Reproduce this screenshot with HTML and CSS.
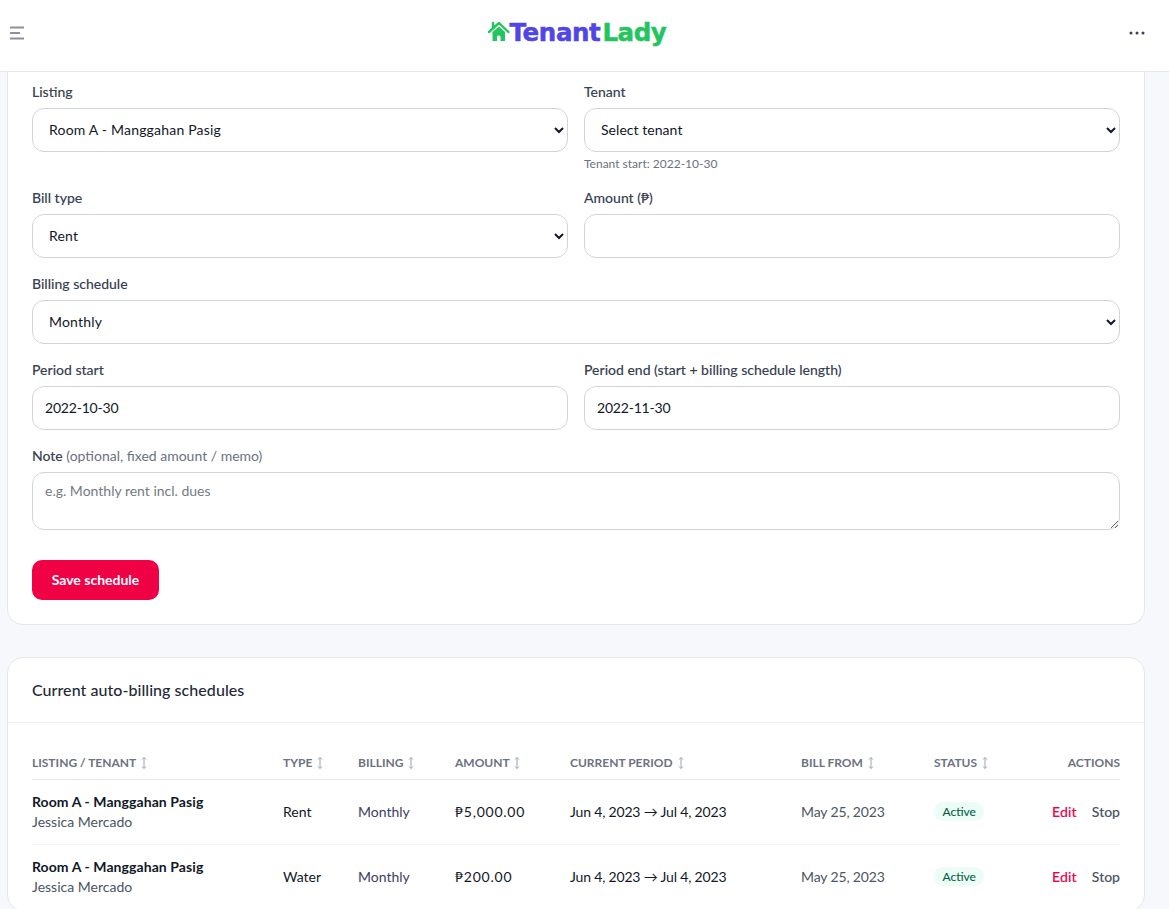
FILE: index.html
```html
<!DOCTYPE html>
<html lang="en">
<head>
<meta charset="utf-8">
<title>TenantLady</title>
<link rel="stylesheet" href="styles.css">
</head>
<body>
<div class="app">
  <header class="topbar">
    <button class="icon-btn" aria-label="Menu">
      <svg width="16" height="14" viewBox="0 0 16 14"><path d="M1 1.500H15M1 7H11M1 12.500H15" stroke="#8b909c" stroke-width="2" fill="none"/></svg>
    </button>
    <div class="logo">
      <svg class="logo-house" width="22" height="22" viewBox="0 0 22 22"><path d="M1 11 11 2l9.500 9M5 2v4" stroke="#22c55e" stroke-width="2.400" fill="none" stroke-linecap="round" stroke-linejoin="round"/><path d="M4.500 11 11 5.500 17 11v9h-4.500v-4.500a2 2 0 0 0-3.500 0V20H4.500z" fill="#22c55e"/></svg>
      <span class="logo-a">Tenant</span><span class="logo-b">Lady</span>
    </div>
    <button class="icon-btn" aria-label="More">
      <svg width="16" height="4" viewBox="0 0 16 4"><circle cx="2" cy="2" r="1.500" fill="#374151"/><circle cx="8" cy="2" r="1.500" fill="#374151"/><circle cx="14" cy="2" r="1.500" fill="#374151"/></svg>
    </button>
  </header>
  <main class="main">
    <section class="card form-card">
      <div class="form-row two">
        <div class="field"><label>Listing</label><select class="control select"><option>Room A - Manggahan Pasig</option></select></div>
        <div class="field"><label>Tenant</label><select class="control select tight"><option>Select tenant</option></select><p class="hint">Tenant start: 2022-10-30</p></div>
      </div>
      <div class="form-row two">
        <div class="field"><label>Bill type</label><select class="control select"><option>Rent</option></select></div>
        <div class="field"><label>Amount (₱)</label><input class="control" type="text"></div>
      </div>
      <div class="form-row">
        <div class="field"><label>Billing schedule</label><select class="control select"><option>Monthly</option></select></div>
      </div>
      <div class="form-row two">
        <div class="field"><label>Period start</label><input class="control date" type="text" value="2022-10-30"></div>
        <div class="field"><label>Period end (start + billing schedule length)</label><input class="control date" type="text" value="2022-11-30"></div>
      </div>
      <div class="form-row">
        <div class="field"><label>Note <span class="muted">(optional, fixed amount / memo)</span></label><textarea class="control area" placeholder="e.g. Monthly rent incl. dues"></textarea></div>
      </div>
      <button class="save">Save schedule</button>
    </section>
    <section class="card table-card">
      <h2 class="card-title">Current auto-billing schedules</h2>
      <div class="table-wrap">
        <table>
          <thead>
            <tr>
              <th class="c1">Listing / Tenant <svg class="sort" width="8" height="14" viewBox="0 0 8 14"><path d="M4 1.500V12.500M2 3.500 4 1.500 6 3.500M2 10.500 4 12.500 6 10.500" stroke="#9aa5b8" fill="none"/></svg></th>
              <th class="c2">Type <svg class="sort" width="8" height="14" viewBox="0 0 8 14"><path d="M4 1.500V12.500M2 3.500 4 1.500 6 3.500M2 10.500 4 12.500 6 10.500" stroke="#9aa5b8" fill="none"/></svg></th>
              <th class="c3">Billing <svg class="sort" width="8" height="14" viewBox="0 0 8 14"><path d="M4 1.500V12.500M2 3.500 4 1.500 6 3.500M2 10.500 4 12.500 6 10.500" stroke="#9aa5b8" fill="none"/></svg></th>
              <th class="c4">Amount <svg class="sort" width="8" height="14" viewBox="0 0 8 14"><path d="M4 1.500V12.500M2 3.500 4 1.500 6 3.500M2 10.500 4 12.500 6 10.500" stroke="#9aa5b8" fill="none"/></svg></th>
              <th class="c5">Current period <svg class="sort" width="8" height="14" viewBox="0 0 8 14"><path d="M4 1.500V12.500M2 3.500 4 1.500 6 3.500M2 10.500 4 12.500 6 10.500" stroke="#9aa5b8" fill="none"/></svg></th>
              <th class="c6">Bill from <svg class="sort" width="8" height="14" viewBox="0 0 8 14"><path d="M4 1.500V12.500M2 3.500 4 1.500 6 3.500M2 10.500 4 12.500 6 10.500" stroke="#9aa5b8" fill="none"/></svg></th>
              <th class="c7">Status <svg class="sort" width="8" height="14" viewBox="0 0 8 14"><path d="M4 1.500V12.500M2 3.500 4 1.500 6 3.500M2 10.500 4 12.500 6 10.500" stroke="#9aa5b8" fill="none"/></svg></th>
              <th class="c8">Actions</th>
            </tr>
          </thead>
          <tbody>
            <tr>
              <td><div class="strong">Room A - Manggahan Pasig</div><div class="sub">Jessica Mercado</div></td>
              <td>Rent</td><td class="indigo">Monthly</td><td class="money">₱5,000.00</td><td class="period">Jun 4, 2023 → Jul 4, 2023</td><td class="grey">May 25, 2023</td>
              <td><span class="badge">Active</span></td>
              <td class="actions"><a class="edit">Edit</a><a class="stop">Stop</a></td>
            </tr>
            <tr>
              <td><div class="strong">Room A - Manggahan Pasig</div><div class="sub">Jessica Mercado</div></td>
              <td>Water</td><td class="indigo">Monthly</td><td class="money">₱200.00</td><td class="period">Jun 4, 2023 → Jul 4, 2023</td><td class="grey">May 25, 2023</td>
              <td><span class="badge">Active</span></td>
              <td class="actions"><a class="edit">Edit</a><a class="stop">Stop</a></td>
            </tr>
          </tbody>
        </table>
      </div>
    </section>
  </main>
</div>
</body>
</html>
```
FILE: styles.css
```css
* { box-sizing: border-box; }
html, body { margin: 0; height: 100%; overflow: hidden; }
body {
  font-family: "Lato", "Noto Sans", sans-serif;
  font-size: 14px;
  color: #111827;
  background: #f7f8fb;
}
.app { display: flex; flex-direction: column; height: 100vh; overflow: hidden; }
.topbar {
  flex: none;
  height: 72px;
  display: flex;
  align-items: center;
  justify-content: space-between;
  padding: 0 24px 5px 9px;
  background: #fff;
  border-bottom: 1px solid #e5e7eb;
}
.icon-btn { border: 0; background: none; padding: 0; display: flex; }
.logo { display: flex; align-items: center; margin-bottom: 2px; font: 700 24.500px "DejaVu Sans", sans-serif; letter-spacing: -0.4px; -webkit-text-stroke: 0.5px currentColor; }
.logo-a { color: #4f46e5; }
.logo-b { color: #22c55e; margin-left: 2px; }
.main { flex: 1; min-height: 0; padding: 0 24px 0 7px; overflow: hidden; }
.card { background: #fff; border: 1px solid #e5e7eb; border-radius: 16px; }
.form-card { border-top: 0; border-top-left-radius: 0; border-top-right-radius: 0; padding: 10px 24px 24px; display: flex; flex-direction: column; gap: 16px; }
.form-row { display: grid; gap: 16px; }
.form-row.two { grid-template-columns: 1fr 1fr; }
.field { display: flex; flex-direction: column; gap: 6px; min-width: 0; }
label { font-size: 14px; line-height: 20px; font-weight: 500; color: #374151; -webkit-text-stroke: 0.08px currentColor; }
.muted { color: #6b7280; font-weight: 400; -webkit-text-stroke: 0; }
.control {
  width: 100%;
  height: 44px;
  padding: 0 12px 2px;
  border: 1px solid #d1d5db;
  border-radius: 12px;
  background: #fff;
  font: 14px "Lato", "Noto Sans", sans-serif;
  letter-spacing: 0.2px;
  color: #111827;
}
.tight { letter-spacing: 0.05px; }
.date { letter-spacing: -0.2px; }
.area { height: 58px; padding: 9px 12px; display: block; resize: vertical; letter-spacing: 0; }
.area::placeholder { color: #757b85; opacity: 1; }
.hint { margin: -2px 0 0; font-size: 12px; line-height: 16px; color: #6b7280; }
.save {
  align-self: flex-start;
  margin-top: 14px;
  width: 127px;
  height: 40px;
  padding: 0 0 2px;
  border: 0;
  border-radius: 10px;
  background: #f00045;
  color: #fff;
  font: 700 14px "Lato", sans-serif;
}
.table-card { margin-top: 32px; }
.card-title { margin: 0; height: 65px; display: flex; align-items: center; padding: 0 24px 2px; font-size: 16px; font-weight: 500; letter-spacing: 0.05px; color: #1f2937; border-bottom: 1px solid #f0f1f4; }
.table-wrap { padding: 24px 24px 0; }
table { width: 100%; border-collapse: collapse; table-layout: fixed; }
th { height: 32px; padding: 0 0 1px; text-align: left; font-size: 12px; font-weight: 700; color: #6b7280; text-transform: uppercase; border-bottom: 1px solid #e5e7eb; white-space: nowrap; }
.sort { vertical-align: -3px; margin-left: 1px; }
.c1 { width: 251px; } .c2 { width: 75px; } .c3 { width: 97px; } .c4 { width: 115px; }
.c5 { width: 231px; } .c6 { width: 133px; } .c7 { width: 90px; } .c8 { text-align: right; }
td { height: 65px; padding: 0; border-bottom: 1px solid #f3f4f6; white-space: nowrap; color: #111827; }
.strong { font-weight: 700; color: #111827; line-height: 20px; letter-spacing: 0.08px; }
.sub { color: #4b5563; line-height: 20px; }
.indigo { color: #3f3d63; }
.money { letter-spacing: 0.75px; }
.period { letter-spacing: -0.18px; }
.grey { color: #4b5563; letter-spacing: -0.15px; }
.badge { display: inline-block; height: 19px; line-height: 19px; padding: 0 8.500px; border-radius: 10px; background: #ecfdf5; color: #065f46; font-size: 12px; -webkit-text-stroke: 0.1px currentColor; }
.actions { text-align: right; }
.edit { color: #f00045; font-weight: 500; letter-spacing: 0.2px; -webkit-text-stroke: 0.1px currentColor; }
.stop { color: #4b5563; font-weight: 500; margin-left: 15px; -webkit-text-stroke: 0.1px currentColor; }
```
